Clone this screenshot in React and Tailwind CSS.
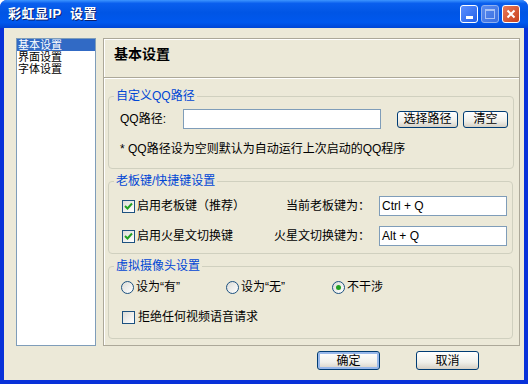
import React from "react";

const font = "font-['Liberation_Sans','Noto_Sans_CJK_SC',sans-serif]";

const Check = ({ checked }) => (
  <span className="w-[13px] h-[13px] border border-[#1c5180] bg-[linear-gradient(135deg,#dcdcd7,#fff)] flex items-center justify-center shrink-0">
    {checked && (
      <svg width="9" height="9" viewBox="0 0 9 9">
        <path d="M1 4 L3.5 6.5 L8 1.5" stroke="#21a121" strokeWidth="2" fill="none" />
      </svg>
    )}
  </span>
);

const Radio = ({ checked }) => (
  <span className="w-[13px] h-[13px] rounded-full border border-[#1c5180] bg-[linear-gradient(135deg,#dcdcd7,#fff)] flex items-center justify-center shrink-0">
    {checked && <span className="w-[5px] h-[5px] rounded-full bg-[#21a121]" />}
  </span>
);

const XpButton = ({ children, className = "", def }) => (
  <button
    className={`rounded-[3px] border border-[#003c74] bg-[linear-gradient(180deg,#fff,#f0f0ea_60%,#d6d0c5)] text-[12px] leading-[14px] text-black flex items-center justify-center ${
      def ? "shadow-[inset_0_0_0_2px_#98b8ea]" : ""
    } ${className}`}
  >
    {children}
  </button>
);

const Group = ({ title, className = "", children }) => (
  <fieldset className={`border border-[#d0d0bf] rounded-[4px] pl-[11px] pr-[5px] ${className}`}>
    <legend className="text-[#0046d5] px-[2px] ml-[-6px] text-[12px] leading-[14px]">{title}</legend>
    {children}
  </fieldset>
);

export default function App() {
  return (
    <div className={`w-[528px] h-[384px] flex flex-col bg-[#0831d9] rounded-t-[7px] ${font} text-[12px] leading-[14px] text-black`}>
      {/* title bar */}
      <div className="h-[28px] shrink-0 rounded-t-[7px] flex items-center px-[8px] bg-[linear-gradient(180deg,#3d95ff_0%,#0a5fee_12%,#0055e5_45%,#0058ee_80%,#0046d5_100%)]">
        <span className="text-white font-bold text-[13px] tracking-[0.5px] [text-shadow:1px_1px_#0a1f6e] flex-1">
          彩虹显IP&nbsp;&nbsp;设置
        </span>
        <div className="flex gap-[3px] items-center">
          <span className="w-[18px] h-[18px] rounded-[3px] border border-white bg-[linear-gradient(135deg,#5a8fff,#2461e8)] flex items-end justify-center pb-[3px]">
            <span className="w-[7px] h-[3px] bg-white" />
          </span>
          <span className="w-[18px] h-[18px] rounded-[3px] border border-[#8fb0f0] bg-[linear-gradient(135deg,#5a8cf0,#3a6ee0)] flex items-center justify-center">
            <span className="w-[10px] h-[10px] border border-[#a8c2f5] border-t-[2px]" />
          </span>
          <span className="w-[18px] h-[18px] rounded-[3px] border border-white bg-[linear-gradient(135deg,#e87a5a,#c8401c)] flex items-center justify-center">
            <svg width="10" height="10" viewBox="0 0 10 10">
              <path d="M1.5 1.5 L8.5 8.5 M8.5 1.5 L1.5 8.5" stroke="#fff" strokeWidth="2" />
            </svg>
          </span>
        </div>
      </div>

      {/* body */}
      <div className="flex-1 mx-[4px] mb-[4px] bg-[#ece9d8] flex flex-col">
        <div className="flex gap-[7px] pt-[10px] pl-[12px]">
          <div className="w-[80px] h-[308px] border border-[#7f9db9] bg-white flex flex-col">
            <span className="bg-[#316ac5] text-white h-[12px] leading-[12px] text-[11px] pl-[1px]">基本设置</span>
            <span className="h-[12px] leading-[12px] text-[11px] pl-[1px]">界面设置</span>
            <span className="h-[12px] leading-[12px] text-[11px] pl-[1px]">字体设置</span>
          </div>

          <div className="w-[417px] h-[308px] border border-[#aca899] shadow-[inset_1px_1px_0_#fff] flex flex-col">
            <div className="h-[39px] pl-[10px] pt-[7px] font-bold text-[14px] leading-[16px] border-b border-[#aca899] shadow-[0_1px_0_#fff]">
              基本设置
            </div>
            <div className="flex flex-col pl-[4px] pr-[6px] pt-[11px] gap-[5px]">
              <Group title="自定义QQ路径" className="h-[80px]">
                <div className="flex items-center mt-[6px]">
                  <span className="w-[63px]">QQ路径:</span>
                  <span className="w-[198px] h-[20px] border border-[#7f9db9] bg-white" />
                  <XpButton className="w-[61px] h-[17px] ml-[16px]">选择路径</XpButton>
                  <XpButton className="w-[45px] h-[17px] ml-[5px]">清空</XpButton>
                </div>
                <div className="mt-[13px]">* QQ路径设为空则默认为自动运行上次启动的QQ程序</div>
              </Group>

              <Group title="老板键/快捷键设置" className="h-[80px]">
                <div className="flex items-center mt-[8px] pl-[2px]">
                  <Check checked />
                  <span className="ml-[2px]">启用老板键（推荐）</span>
                  <span className="ml-auto mr-[9px]">当前老板键为：</span>
                  <span className="w-[128px] h-[20px] border border-[#7f9db9] bg-white flex items-center pl-[2px] shrink-0">Ctrl + Q</span>
                </div>
                <div className="flex items-center mt-[10px] pl-[2px]">
                  <Check checked />
                  <span className="ml-[2px]">启用火星文切换键</span>
                  <span className="ml-auto mr-[9px]">火星文切换键为：</span>
                  <span className="w-[128px] h-[20px] border border-[#7f9db9] bg-white flex items-center pl-[2px] shrink-0">Alt + Q</span>
                </div>
              </Group>

              <Group title="虚拟摄像头设置" className="h-[80px]">
                <div className="flex items-center mt-[7px] pl-[1px]">
                  <div className="flex items-center gap-[2px] w-[105px]">
                    <Radio />
                    <span>设为“有”</span>
                  </div>
                  <div className="flex items-center gap-[2px] w-[106px]">
                    <Radio />
                    <span>设为“无”</span>
                  </div>
                  <div className="flex items-center gap-[2px]">
                    <Radio checked />
                    <span>不干涉</span>
                  </div>
                </div>
                <div className="flex items-center mt-[16px] pl-[2px]">
                  <Check />
                  <span className="ml-[3px]">拒绝任何视频语音请求</span>
                </div>
              </Group>
            </div>
          </div>
        </div>

        <div className="flex mt-[5px] pl-[313px] gap-[36px]">
          <XpButton def className="w-[63px] h-[19px]">确定</XpButton>
          <XpButton className="w-[63px] h-[19px]">取消</XpButton>
        </div>
      </div>
    </div>
  );
}
